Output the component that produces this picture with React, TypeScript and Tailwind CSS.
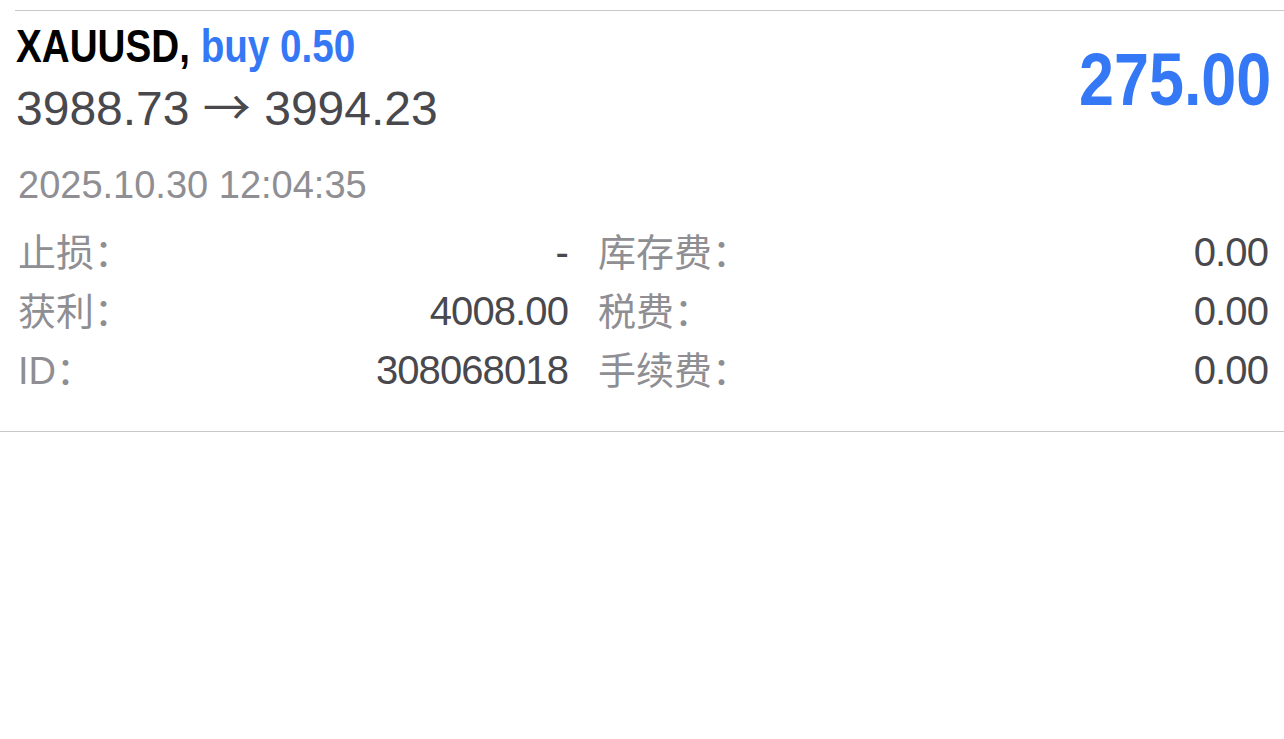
import React from 'react'

const body = "font-['Liberation_Sans','Noto_Sans_CJK_SC',sans-serif]"

type Cell = { label: string; value: string }

const rows: [Cell, Cell][] = [
  [{ label: '止损：', value: '-' }, { label: '库存费：', value: '0.00' }],
  [{ label: '获利：', value: '4008.00' }, { label: '税费：', value: '0.00' }],
  [{ label: 'ID：', value: '308068018' }, { label: '手续费：', value: '0.00' }],
]

function Field({ cell }: { cell: Cell }) {
  return (
    <div className="flex items-baseline justify-between">
      <span className="text-[38px] text-[#8e8e93]">{cell.label}</span>
      <span className="text-[40px] tracking-[-0.9px] text-[#48484d]">{cell.value}</span>
    </div>
  )
}

export default function App() {
  return (
    <div className={`min-h-screen bg-white pt-[10px] ${body}`}>
      <div className="ml-[15px] h-px bg-[#c8c7cc]" />

      <div className="px-[16px] pt-[7px] pb-[31px]">
        {/* header: symbol + prices, profit on the right */}
        <div className="flex items-start justify-between">
          <div>
            <div className="origin-left scale-x-[0.84] whitespace-nowrap text-[46px] font-bold leading-[56px]">
              <span className="text-black">XAUUSD,</span>{' '}
              <span className="text-[#3478f6]">buy 0.50</span>
            </div>
            <div className="mt-[6px] h-[56px] whitespace-nowrap text-[48px] leading-[56px] text-[#48484d]">
              3988.73{' '}
              <span className="inline-block font-['Noto_Sans_CJK_SC',sans-serif] leading-none">→</span>{' '}
              3994.23
            </div>
          </div>
          <div className="-mr-[3px] mt-[25px] origin-right scale-x-[0.85] text-[74px] font-bold leading-[74px] text-[#3478f6]">
            275.00
          </div>
        </div>

        <div className="mt-[27px] pl-[2px] text-[38px] leading-[44px] text-[#8e8e93]">
          2025.10.30 12:04:35
        </div>

        <div className="mt-[16px] pl-[2px]">
          {rows.map(([a, b], i) => (
            <div key={i} className="grid h-[59px] grid-cols-[550px_1fr] items-center gap-x-[30px] leading-[59px]">
              <Field cell={a} />
              <Field cell={b} />
            </div>
          ))}
        </div>
      </div>

      <div className="h-px bg-[#c8c7cc]" />
    </div>
  )
}
